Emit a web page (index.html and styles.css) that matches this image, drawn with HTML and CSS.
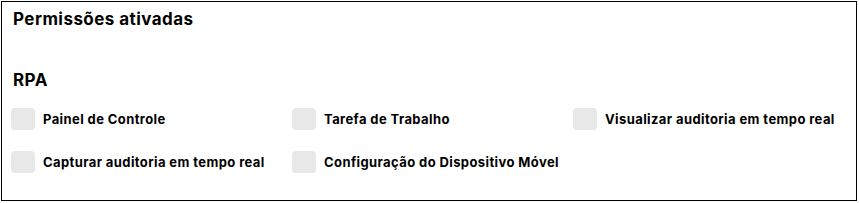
FILE: index.html
```html
<!DOCTYPE html>
<html lang="pt-BR">
<head>
    <meta charset="UTF-8">
    <meta name="viewport" content="width=device-width, initial-scale=1.0">
    <title>Permissões ativadas</title>
    <link rel="stylesheet" href="styles.css">
</head>
<body>
    <div class="card">
        <h2 class="card-title">Permissões ativadas</h2>

        <h3 class="group-title">RPA</h3>
        <div class="perm-grid">
            <label class="perm"><span class="check"></span><span class="perm-name">Painel de Controle</span></label>
            <label class="perm"><span class="check"></span><span class="perm-name">Tarefa de Trabalho</span></label>
            <label class="perm"><span class="check"></span><span class="perm-name">Visualizar auditoria em tempo real</span></label>
            <label class="perm"><span class="check"></span><span class="perm-name">Capturar auditoria em tempo real</span></label>
            <label class="perm"><span class="check"></span><span class="perm-name">Configuração do Dispositivo Móvel</span></label>
        </div>
    </div>
</body>
</html>
```

FILE: styles.css
```css
body {
    margin: 1px;
    font-family: 'Inter', 'Liberation Sans', sans-serif;
    color: #000;
    background: #fff;
}

.card {
    width: 856px;
    height: 200px;
    box-sizing: border-box;
    border: 1px solid #000;
    padding: 5px 3px 0 9px;
}

.card-title {
    margin: 0;
    font-size: 17px;
    line-height: 24px;
    font-weight: 700;
    letter-spacing: 0.45px;
    padding-left: 2px;
}

.group-title {
    margin: 37px 0 0;
    font-size: 17px;
    line-height: 24px;
    font-weight: 700;
    letter-spacing: 0.45px;
    padding-left: 2px;
}

.perm-grid {
    margin-top: 16px;
    display: grid;
    grid-template-columns: repeat(3, 281px);
    row-gap: 21px;
}

.perm {
    display: flex;
    align-items: center;
    gap: 8px;
    height: 22px;
    cursor: pointer;
}

.check {
    width: 24px;
    height: 22px;
    border-radius: 4px;
    background-color: #e8e8e8;
    flex-shrink: 0;
}

.perm-name {
    font-size: 13px;
    font-weight: 700;
    letter-spacing: 0.4px;
}
```
